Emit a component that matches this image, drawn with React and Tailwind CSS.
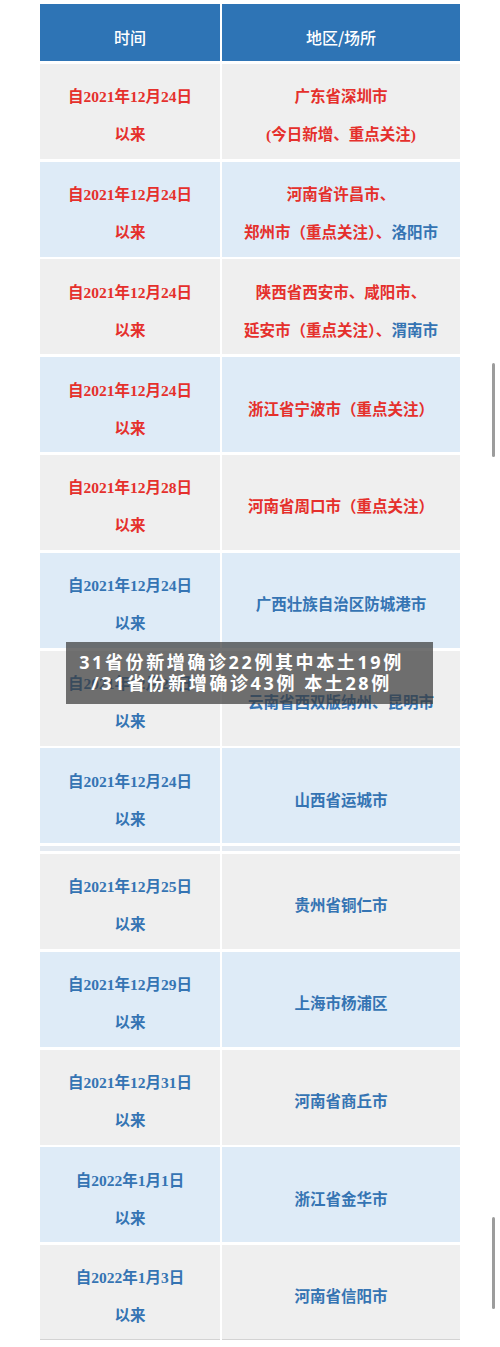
import React from "react";

const RED = "text-[#e5302c]";
const BLUE = "text-[#3574b3]";

const rows = [
  { bg: "bg-[#efefef]", c: RED, l: "自2021年12月24日", r: [["广东省深圳市"], ["(今日新增、重点关注)"]] },
  { bg: "bg-[#deebf7]", c: RED, l: "自2021年12月24日", r: [["河南省许昌市、"], ["郑州市（重点关注）、", "洛阳市"]] },
  { bg: "bg-[#efefef]", c: RED, l: "自2021年12月24日", r: [["陕西省西安市、咸阳市、"], ["延安市（重点关注）、", "渭南市"]] },
  { bg: "bg-[#deebf7]", c: RED, l: "自2021年12月24日", r: [["浙江省宁波市（重点关注）"]] },
  { bg: "bg-[#efefef]", c: RED, l: "自2021年12月28日", r: [["河南省周口市（重点关注）"]] },
  { bg: "bg-[#deebf7]", c: BLUE, l: "自2021年12月24日", r: [["广西壮族自治区防城港市"]] },
  { bg: "bg-[#efefef]", c: BLUE, l: "自2021年12月24日", r: [["云南省西双版纳州、昆明市"]] },
  { bg: "bg-[#deebf7]", c: BLUE, l: "自2021年12月24日", r: [["山西省运城市"]], strip: true },
  { bg: "bg-[#efefef]", c: BLUE, l: "自2021年12月25日", r: [["贵州省铜仁市"]] },
  { bg: "bg-[#deebf7]", c: BLUE, l: "自2021年12月29日", r: [["上海市杨浦区"]] },
  { bg: "bg-[#efefef]", c: BLUE, l: "自2021年12月31日", r: [["河南省商丘市"]] },
  { bg: "bg-[#deebf7]", c: BLUE, l: "自2022年1月1日", r: [["浙江省金华市"]] },
  { bg: "bg-[#efefef]", c: BLUE, l: "自2022年1月3日", r: [["河南省信阳市"]], last: true },
];

const cellFont = {
  fontFamily: '"Liberation Serif", "Noto Sans CJK SC", serif',
};

function Row({ row }) {
  const edge = row.last ? "border-b border-[#d3d3d3]" : "";
  return (
    <div className="grid grid-cols-[180px_1fr] gap-x-[2px] h-[95px]">
      <div className={`${row.bg} ${row.c} ${edge} flex flex-col items-center justify-center pt-[10px] text-[15.5px] leading-[38px] font-bold`} style={cellFont}>
        <div>{row.l}</div>
        <div>以来</div>
      </div>
      <div className={`${row.bg} ${row.c} ${edge} flex flex-col items-center justify-center pt-[10px] text-[15.5px] leading-[38px] font-bold`} style={cellFont}>
        {row.r.map((line, i) => (
          <div key={i}>
            {line[0]}
            {line[1] ? <span className="text-[#3574b3]">{line[1]}</span> : null}
          </div>
        ))}
      </div>
    </div>
  );
}

export default function App() {
  return (
    <div className="relative w-[500px] h-[1347px] bg-white overflow-hidden">
      <div className="px-[40px] pt-[4px] flex flex-col gap-y-[2.8px]">
        <div className="grid grid-cols-[180px_1fr] gap-x-[2px] h-[57px]">
          <div className="bg-[#2e74b5] text-white flex items-center justify-center pt-[9px] text-[16px] font-medium" style={{ fontFamily: '"Noto Sans CJK SC", sans-serif' }}>时间</div>
          <div className="bg-[#2e74b5] text-white flex items-center justify-center pt-[9px] text-[16px] font-medium" style={{ fontFamily: '"Noto Sans CJK SC", sans-serif' }}>地区/场所</div>
        </div>
        {rows.map((row, i) => (
          <React.Fragment key={i}>
            <Row row={row} />
            {row.strip ? (
              <div className="grid grid-cols-[180px_1fr] gap-x-[2px] h-[5px]">
                <div className="bg-[#e4eaf1]" />
                <div className="bg-[#e4eaf1]" />
              </div>
            ) : null}
          </React.Fragment>
        ))}
      </div>

      <div className="absolute left-[492px] top-[363px] w-[3px] h-[94px] rounded-full bg-[#9c9c9c]" />
      <div className="absolute left-[492px] top-[1217px] w-[3px] h-[92px] rounded-full bg-[#9c9c9c]" />

      <div className="absolute left-[66px] top-[642px] w-[367px] h-[62px] bg-[rgba(60,60,60,0.72)] pl-[6px] pr-[22px] flex flex-col justify-center text-center text-white text-[18px] leading-[21px] tracking-[2.6px] font-bold" style={{ fontFamily: '"Noto Sans", "Noto Sans CJK SC", sans-serif' }}>
        <div>31省份新增确诊22例其中本土19例</div>
        <div>/31省份新增确诊43例 本土28例</div>
      </div>
    </div>
  );
}
